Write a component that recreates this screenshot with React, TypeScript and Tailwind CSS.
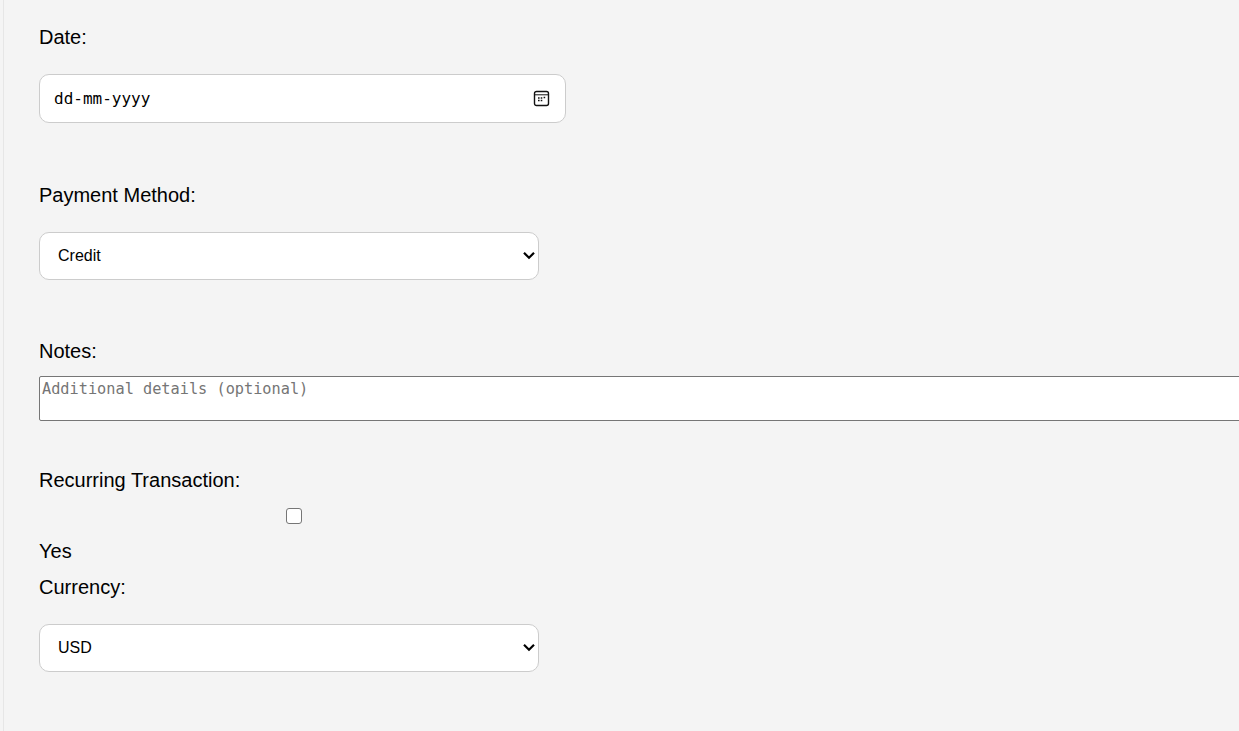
function Chevron() {
  return (
    <svg
      className="absolute right-[3px] top-[19px] pointer-events-none"
      width="14"
      height="9"
      viewBox="0 0 14 9"
      fill="none"
      stroke="black"
      strokeWidth="2.2"
    >
      <path d="M2 1.8l5 5 5-5" />
    </svg>
  );
}

function SelectBox({ value, options }: { value: string; options: string[] }) {
  return (
    <div className="relative mt-[25px] w-[500px] h-[48px]">
      <select
        defaultValue={value}
        className="block w-full h-full bg-white border border-[#cccccc] rounded-[10px] pl-[18px] pr-[20px] text-[16px] text-black appearance-none outline-none"
      >
        {options.map((o) => (
          <option key={o}>{o}</option>
        ))}
      </select>
      <Chevron />
    </div>
  );
}

export default function App() {
  const label = "block text-[20px] leading-[23px] text-black";
  return (
    <div className="h-[731px] overflow-hidden bg-[#f4f4f4] pl-[3px]">
      <div className="h-full border-l border-[#e6e6e6] font-['Liberation_Sans',Arial,sans-serif]">
        <form className="w-[1300px] pl-[35px] pt-[26px]">
          <label className={label}>Date:</label>
          <div className="mt-[25px] w-[527px] h-[49px] bg-white border border-[#cccccc] rounded-[10px] flex items-center justify-between pl-[14px] pr-[15px]">
            <span className="pt-[1px] font-['DejaVu_Sans_Mono',monospace] text-[16px] text-black">dd-mm-yyyy</span>
            <svg width="17" height="17" viewBox="0 0 17 17" fill="none" stroke="#111">
              <rect x="1.5" y="1.5" width="14" height="14" rx="2" strokeWidth="1.4" />
              <path d="M2 4.8h13" strokeWidth="1" />
              <path d="M5 8h1.6M7.7 8h1.6M10.6 7.5h1.6M5 10.5h1.6M7.7 10.5h1.6" strokeWidth="1.7" />
            </svg>
          </div>
          <label className={`${label} mt-[61px]`}>Payment Method:</label>
          <SelectBox value="Credit" options={["Credit", "Debit"]} />
          <label className={`${label} mt-[60px]`}>Notes:</label>
          <textarea
            placeholder="Additional details (optional)"
            className="mt-[13px] block w-[1240px] h-[45px] bg-white border border-[#767676] rounded-[2px] px-[2px] pt-[3px] font-['DejaVu_Sans_Mono',monospace] text-[15.25px] leading-[18px] placeholder:text-[#757575] resize-none outline-none"
          />
          <label className={`${label} mt-[48px]`}>Recurring Transaction:</label>
          <div className="mt-[16px] w-[510px] flex justify-center h-[16px]">
            <input type="checkbox" className="appearance-none w-[16px] h-[16px] bg-white border border-[#767676] rounded-[3px]" />
          </div>
          <div className={`${label} mt-[16px]`}>Yes</div>
          <label className={`${label} mt-[13px]`}>Currency:</label>
          <SelectBox value="USD" options={["USD", "EUR"]} />
        </form>
      </div>
    </div>
  );
}
